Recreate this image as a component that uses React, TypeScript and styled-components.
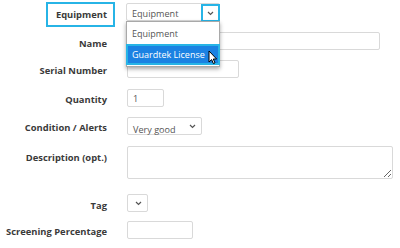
import React from "react";
import styled, { createGlobalStyle } from "styled-components";

const Global = createGlobalStyle`
  html, body { margin: 0; padding: 0; background: #fff; }
  body { font-family: "Open Sans", "Liberation Sans", sans-serif; }
  * { box-sizing: border-box; }
`;

const Form = styled.div`
  width: 400px;
  height: 248px;
  padding-top: 3px;
  display: flex;
  flex-direction: column;
  overflow: hidden;
`;

const Row = styled.div<{ $gap: number; $top?: boolean }>`
  display: grid;
  grid-template-columns: 107px auto;
  column-gap: 20px;
  align-items: ${(p) => (p.$top ? "start" : "center")};
  margin-top: ${(p) => p.$gap}px;
  position: relative;
`;

const Label = styled.div<{ $pt?: number; $dy?: number }>`
  text-align: right;
  font-weight: 700;
  font-size: 9.4px;
  color: #3a3a3a;
  white-space: nowrap;
  padding-top: ${(p) => p.$pt ?? 0}px;
  position: relative;
  top: ${(p) => p.$dy ?? 0}px;
`;

const Highlight = styled.span`
  position: relative;
  &::after {
    content: "";
    position: absolute;
    left: -10px;
    right: -8px;
    top: -6px;
    bottom: -6px;
    border: 2px solid #27b4e6;
  }
`;

const Field = styled.div<{ $w: number; $h?: number }>`
  width: ${(p) => p.$w}px;
  height: ${(p) => p.$h ?? 18}px;
  border: 1px solid #d9d9d9;
  border-radius: 2px;
  background: #fff;
  font-size: 9.1px;
  color: #555;
  display: flex;
  align-items: center;
  padding-left: 5px;
  position: relative;
`;

const Area = styled.textarea`
  width: 266px;
  height: 33px;
  border: 1px solid #d9d9d9;
  border-radius: 2px;
  font-family: inherit;
  margin: 0;
  display: block;
`;

const Chevron = styled.span<{ $boxed?: boolean }>`
  position: absolute;
  right: ${(p) => (p.$boxed ? "-1px" : "4px")};
  top: ${(p) => (p.$boxed ? "0px" : "3px")};
  width: ${(p) => (p.$boxed ? "19px" : "10px")};
  height: ${(p) => (p.$boxed ? "18px" : "10px")};
  display: flex;
  align-items: center;
  justify-content: center;
  border: ${(p) => (p.$boxed ? "2px solid #27b4e6" : "none")};
`;

const SelectText = styled.span<{ $dy?: number }>`
  position: relative;
  top: ${(p) => p.$dy ?? 0}px;
`;

const Menu = styled.div`
  position: absolute;
  left: -1px;
  top: 17px;
  width: 94px;
  background: #fff;
  border: 1px solid #a9a9a9;
  box-shadow: 0 2px 4px rgba(0, 0, 0, 0.35);
  z-index: 5;
  padding-bottom: 1px;
`;

const Option = styled.div<{ $active?: boolean }>`
  height: ${(p) => (p.$active ? 21 : 22)}px;
  display: flex;
  align-items: center;
  padding-left: ${(p) => (p.$active ? 4 : 5)}px;
  font-size: 9px;
  color: ${(p) => (p.$active ? "#fff" : "#555")};
  background: ${(p) => (p.$active ? "#1b82e2" : "#fff")};
  border: ${(p) => (p.$active ? "2px solid #27b4e6" : "none")};
  margin: ${(p) => (p.$active ? "0 -1px" : "0")};
  white-space: nowrap;
  position: relative;
`;

const Cursor = styled.svg`
  position: absolute;
  left: 80px;
  top: 4px;
`;

const ChevronIcon = () => (
  <svg width="7" height="5" viewBox="0 0 7 5">
    <path d="M1 1 L3.5 3.5 L6 1" fill="none" stroke="#555" strokeWidth="1.2" />
  </svg>
);

export default function App() {
  return (
    <>
      <Global />
      <Form>
        <Row $gap={0}>
          <Label $dy={2}>
            <Highlight>Equipment</Highlight>
          </Label>
          <Field $w={94} style={{ marginLeft: -1, zIndex: 5 }}>
            <SelectText $dy={1}>Equipment</SelectText>
            <Chevron $boxed>
              <ChevronIcon />
            </Chevron>
            <Menu>
              <Option>Equipment</Option>
              <Option $active>
                Guardtek License
                <Cursor width="10" height="15" viewBox="0 0 10 15">
                  <path
                    d="M1 1 L1 12 L3.6 9.6 L5.4 13.6 L7 12.9 L5.3 9 L8.6 9 Z"
                    fill="#fff"
                    stroke="#000"
                    strokeWidth="1"
                    strokeLinejoin="round"
                  />
                </Cursor>
              </Option>
            </Menu>
          </Field>
        </Row>
        <Row $gap={11}>
          <Label $dy={2}>Name</Label>
          <Field $w={253} />
        </Row>
        <Row $gap={10}>
          <Label $dy={1}>Serial Number</Label>
          <Field $w={112} />
        </Row>
        <Row $gap={11}>
          <Label $dy={1}>Quantity</Label>
          <Field $w={37}>1</Field>
        </Row>
        <Row $gap={10}>
          <Label $dy={1}>Condition / Alerts</Label>
          <Field $w={75}>
            <SelectText $dy={3}>Very good</SelectText>
            <Chevron>
              <ChevronIcon />
            </Chevron>
          </Field>
        </Row>
        <Row $gap={11} $top>
          <Label $pt={5}>Description (opt.)</Label>
          <Area />
        </Row>
        <Row $gap={15}>
          <Label $dy={2}>Tag</Label>
          <Field $w={21}>
            <Chevron>
              <ChevronIcon />
            </Chevron>
          </Field>
        </Row>
        <Row $gap={9}>
          <Label $dy={1}>Screening Percentage</Label>
          <Field $w={66} />
        </Row>
      </Form>
    </>
  );
}
